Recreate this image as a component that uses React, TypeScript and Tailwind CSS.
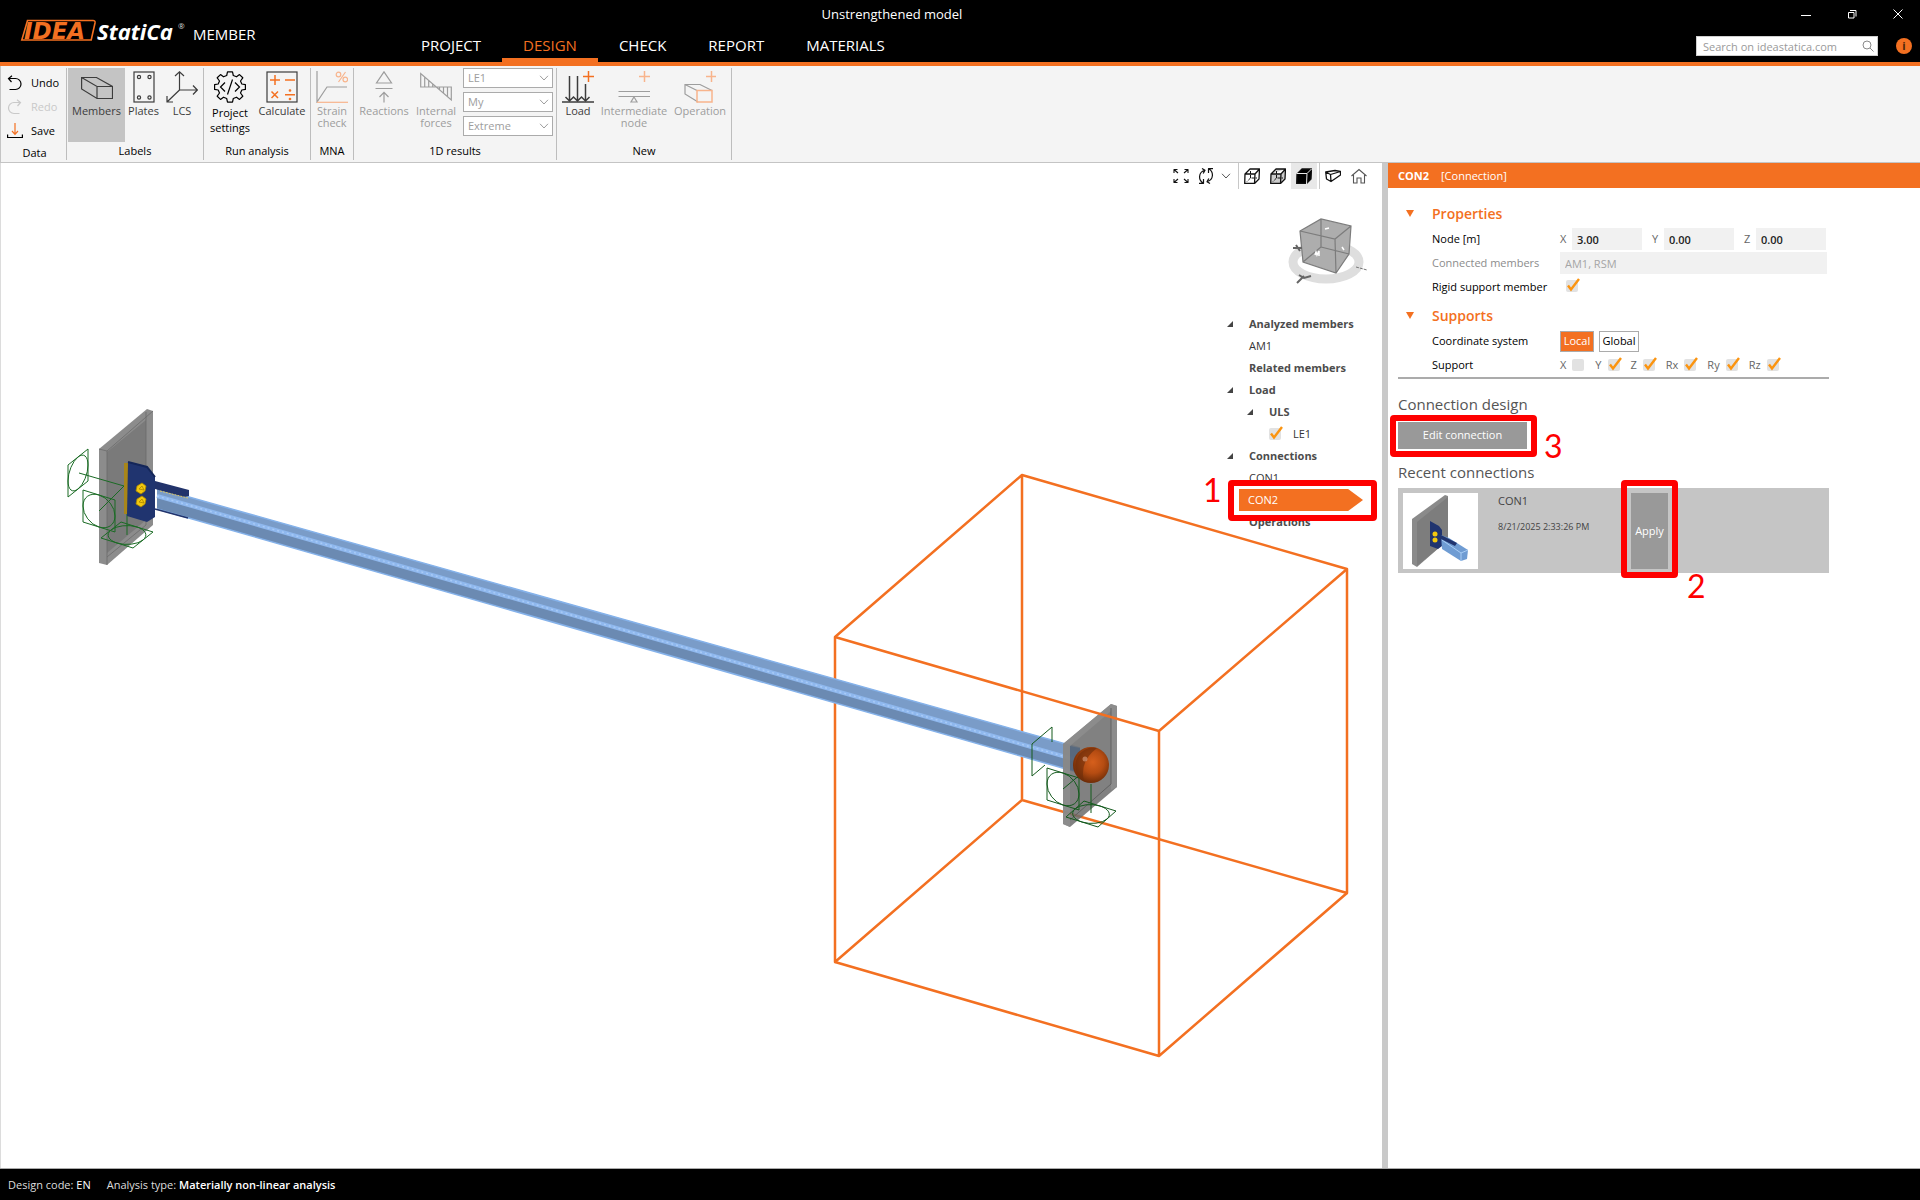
import React from "react";

type P = { children?: React.ReactNode };

/* ---------- ribbon icons (32 x 32 grid) ---------- */

const Glyph = ({ children }: P) => (
  <svg viewBox="0 0 32 32" className="h-8 w-8 shrink-0" fill="none" stroke="currentColor" strokeWidth="1.2" aria-hidden="true">
    {children}
  </svg>
);

const MembersIcon = () => (
  <Glyph>
    <path d="M.6 6.5 L15.5 6.5 L31.5 15.5 V27.5 H16 L.6 18 Z M.6 6.5 L16 15.5 H31.5 M16 15.5 V27.5" />
  </Glyph>
);
const PlatesIcon = () => (
  <Glyph>
    <rect x="6" y="1" width="20" height="30" />
    <circle cx="11" cy="6" r="1.6" />
    <circle cx="21.5" cy="6" r="1.6" />
    <circle cx="11" cy="26.5" r="1.6" />
    <circle cx="21.5" cy="26.5" r="1.6" />
  </Glyph>
);
const LcsIcon = () => (
  <Glyph>
    <path d="M13.5 1 V19 M9 5 L13.5 .8 L18 5 M13.5 19 H31 M27 14.5 L31.3 19 L27 23.5 M13.5 19 L1 31 M1 25 V31 H7" />
  </Glyph>
);
const SettingsIcon = () => (
  <Glyph>
    <path d="M13.5 .8 H18.500 L19.300 4.500 L22.500 5.800 L25.500 3.600 L28.800 6.800 L26.500 10 L27.800 13 L31.400 13.600 V18.400 L27.800 19 L26.500 22 L28.800 25.200 L25.500 28.400 L22.500 26.200 L19.300 27.500 L18.500 31.200 H13.500 L12.700 27.500 L9.500 26.200 L6.500 28.400 L3.200 25.200 L5.500 22 L4.200 19 L.6 18.400 V13.600 L4.200 13 L5.500 10 L3.200 6.800 L6.500 3.600 L9.500 5.800 L12.700 4.500 Z" strokeLinejoin="round" />
    <path d="M11 11.5 L6.5 16 L11 20.5 M21 11.5 L25.5 16 L21 20.5 M18.5 8.5 L13.5 23.5" />
  </Glyph>
);
const CalculateIcon = () => (
  <Glyph>
    <rect x="1" y="1" width="30" height="30" />
    <g stroke="#f37021" strokeWidth="1.5">
      <path d="M4 9 H14 M9 4 V14 M19 9 H29 M5.5 20.5 L12 27 M12 20.5 L5.5 27 M19 23.8 H29" />
      <circle cx="24" cy="19.5" r=".6" />
      <circle cx="24" cy="28" r=".6" />
    </g>
  </Glyph>
);
const StrainIcon = () => (
  <Glyph>
    <path d="M1 0 V31 L11 16 H31" />
    <g stroke="#f8b48c">
      <path d="M1 31.3 H32" />
      <path d="M29.5 1 L22.5 11" />
      <circle cx="22.5" cy="3.5" r="2.3" />
      <circle cx="29.3" cy="8.5" r="2.3" />
    </g>
  </Glyph>
);
const ReactionsIcon = () => (
  <Glyph>
    <path d="M16 .8 L23.5 12 H8.5 Z M7.5 17.5 H24.5 M16 31.5 V21.5 M11.5 26 L16 21.3 L20.5 26" />
  </Glyph>
);
const InternalIcon = () => (
  <Glyph>
    <path d="M.7 2.5 V16 H31.3 V29 Z M4.7 6 V16 M8.7 9.5 V16 M12.7 13 V16 M19.5 16 V19 M23.5 16 V22.5 M27.5 16 V26" />
  </Glyph>
);
const LoadIcon = () => (
  <Glyph>
    <path d="M7.5 5 V30 M15.5 5 V30 M23.5 13 V30 M3.5 26 L7.5 30 L11.5 26 L15.5 30 L19.5 26 L23.5 30 L27.5 26" strokeWidth="1.5" />
    <path d="M0 31 H32" strokeWidth="1.5" />
    <path d="M21 5.5 H32 M26.5 0 V11" stroke="#f37021" strokeWidth="1.5" />
  </Glyph>
);
const IntermediateIcon = () => (
  <Glyph>
    <path d="M.5 20.5 H32 M.5 25.5 H32 M16 26 L19 31 H13 Z" />
    <path d="M21 5.5 H32 M26.5 0 V11" stroke="#f8b48c" strokeWidth="1.5" />
  </Glyph>
);
const OperationIcon = () => (
  <Glyph>
    <path d="M14 31 L1 23 V13.5 H16 L28 19.5 M1 13.5 L13 19.5" />
    <g stroke="#f8b48c" strokeWidth="1.5">
      <path d="M13 19.5 H28 V31 H13 Z M22 5.5 H32 M27.5 0 V11" />
    </g>
  </Glyph>
);

/* ---------- ribbon ---------- */

function Group({ label, children }: P & { label: string }) {
  return (
    <section className="flex flex-col border-r border-[#bdbdbd] px-px" aria-label={label}>
      <div className="flex flex-1">{children}</div>
      <h2 className="pb-px text-center text-[11px] leading-4 text-black">{label}</h2>
    </section>
  );
}

function Tool({
  icon,
  label,
  width,
  disabled,
  active,
  strong,
}: {
  icon: React.ReactNode;
  label: string;
  width: string;
  disabled?: boolean;
  active?: boolean;
  strong?: boolean;
}) {
  const tone = disabled ? "text-[#9d9d9d]" : strong ? "text-black" : "text-[#3c3c3c]";
  return (
    <button
      type="button"
      disabled={disabled}
      aria-pressed={active}
      className={`flex h-[74px] flex-col items-center gap-0.5 pt-[3px] text-[11px] ${strong ? "leading-[15px]" : "leading-3"} ${tone} ${width} ${active ? "bg-[#c4c4c4]" : ""}`}
    >
      {icon}
      <span>{label}</span>
    </button>
  );
}

function ResultSelect({ label, value }: { label: string; value: string }) {
  return (
    <div className="relative h-5 text-[#9d9d9d]">
      <select
        aria-label={label}
        disabled
        defaultValue={value}
        className="h-5 w-[90px] appearance-none border border-[#ababab] bg-white px-1 text-[11px] leading-4 text-[#9d9d9d] opacity-100"
      >
        <option>{value}</option>
      </select>
      <svg viewBox="0 0 10 6" className="pointer-events-none absolute top-[7px] right-1 h-1.5 w-2.5" fill="none" stroke="currentColor" aria-hidden="true">
        <path d="M1 .8 L5 5 L9 .8" />
      </svg>
    </div>
  );
}

function DataButton({ icon, label, disabled }: { icon: React.ReactNode; label: string; disabled?: boolean }) {
  return (
    <button
      type="button"
      disabled={disabled}
      className={`flex h-6 items-center gap-2 text-[11px] ${disabled ? "text-[#c9c9c9]" : "text-black"}`}
    >
      <svg viewBox="0 0 16 16" className="h-4 w-4" fill="none" stroke="currentColor" strokeWidth="1.2" aria-hidden="true">
        {icon}
      </svg>
      {label}
    </button>
  );
}

function Ribbon() {
  return (
    <div className="flex h-[97px] border-b border-l border-[#c4c4c4] bg-[#f4f4f4] pt-0.5 pb-0.5">
      <section className="flex w-[66px] flex-col border-r border-[#bdbdbd] pl-1.5" aria-label="Data">
        <div className="flex flex-1 flex-col pt-[3px]">
          <DataButton label="Undo" icon={<path d="M5 .8 L1.5 3.5 L4.500 7 M1.5 3.5 H8.5 A5.5 5.5 0 0 1 8.5 14.5 H2.5" />} />
          <DataButton label="Redo" disabled icon={<path d="M10 .8 L13.5 3.5 L10.5 7 M13.5 3.5 H7 A5.5 5.5 0 0 0 7 14.5 H12.5" />} />
          <DataButton
            label="Save"
            icon={
              <>
                <path d="M.6 11.5 V14.5 H15.4 V11.5" />
                <path d="M8 0 V11 M5 8 L8 11.3 L11 8" stroke="#f37021" />
              </>
            }
          />
        </div>
        <h2 className="pr-1 pb-px text-center text-[11px] leading-3 text-black">Data</h2>
      </section>
      <Group label="Labels">
        <Tool active icon={<MembersIcon />} label="Members" width="w-[57px]" />
        <Tool icon={<PlatesIcon />} label="Plates" width="w-[37px]" />
        <Tool icon={<LcsIcon />} label="LCS" width="w-[40px]" />
      </Group>
      <Group label="Run analysis">
        <Tool strong icon={<SettingsIcon />} label="Project settings" width="w-[50px]" />
        <Tool icon={<CalculateIcon />} label="Calculate" width="w-[54px]" />
      </Group>
      <Group label="MNA">
        <Tool disabled icon={<StrainIcon />} label="Strain check" width="w-[40px]" />
      </Group>
      <Group label="1D results">
        <Tool disabled icon={<ReactionsIcon />} label="Reactions" width="w-[58px]" />
        <Tool disabled icon={<InternalIcon />} label="Internal forces" width="w-[46px]" />
        <div className="flex flex-col gap-1 px-1 pr-0.5">
          <ResultSelect label="Load effect" value="LE1" />
          <ResultSelect label="Force component" value="My" />
          <ResultSelect label="Result values" value="Extreme" />
        </div>
      </Group>
      <Group label="New">
        <Tool icon={<LoadIcon />} label="Load" width="w-[40px]" />
        <Tool disabled icon={<IntermediateIcon />} label="Intermediate node" width="w-[72px]" />
        <Tool disabled icon={<OperationIcon />} label="Operation" width="w-[60px]" />
      </Group>
    </div>
  );
}

/* ---------- header ---------- */

function Header() {
  const tabs = ["PROJECT", "DESIGN", "CHECK", "REPORT", "MATERIALS"];
  return (
    <header className="grid h-[66px] grid-cols-[400px_1fr_532px] border-b-4 border-[#f37021] bg-black text-white">
      <div className="flex items-center pl-5">
        <svg viewBox="0 0 172 28" className="h-7 w-[172px]" role="img" aria-label="IDEA StatiCa">
          <path d="M7.5 3.500 H73 Q75.5 3.500 75 6 L71.2 23 H1.8 Z" fill="none" stroke="#f37021" strokeWidth="1.6" />
          <text x="4" y="21.500" fill="#f37021" fontFamily="DejaVu Sans, sans-serif" fontStyle="italic" fontWeight="700" fontSize="23">
            IDEA
          </text>
          <text x="77" y="22.5" fill="#fff" fontFamily="Open Sans, sans-serif" fontStyle="italic" fontWeight="700" fontSize="22">
            StatiCa
          </text>
          <text x="158" y="12" fill="#ddd" fontFamily="Open Sans, sans-serif" fontSize="8">
            ®
          </text>
        </svg>
        <span className="pt-1.5 pl-px text-[15px]">MEMBER</span>
      </div>
      <div className="flex flex-col">
        <h1 className="h-[34px] pt-1 pr-1 text-center text-[13px] leading-5">Unstrengthened model</h1>
        <nav className="flex h-7">
          {tabs.map((t) => (
            <a
              key={t}
              href="#"
              aria-current={t === "DESIGN" ? "page" : undefined}
              className={
                t === "DESIGN"
                  ? "border-b-4 border-[#f37021] px-[21px] text-[15px] leading-[22px] text-[#f37021]"
                  : "px-[21px] text-[15px] leading-[22px]"
              }
            >
              {t}
            </a>
          ))}
        </nav>
      </div>
      <div className="flex flex-col items-end">
        <div className="flex h-9 gap-[26px] pt-1 pr-3">
          <button type="button" aria-label="Minimize" className="flex h-5 w-5 items-center justify-center">
            <svg viewBox="0 0 10 10" className="h-2.5 w-2.5" stroke="#fff" aria-hidden="true">
              <path d="M0 6.5 H10" />
            </svg>
          </button>
          <button type="button" aria-label="Restore" className="flex h-5 w-5 items-center justify-center">
            <svg viewBox="0 0 10 10" className="h-2.5 w-2.5" stroke="#fff" fill="none" aria-hidden="true">
              <path d="M1.5 3.5 H7 V9 H1.5 Z M3 1.5 H9 V7.5" />
            </svg>
          </button>
          <button type="button" aria-label="Close" className="flex h-5 w-5 items-center justify-center">
            <svg viewBox="0 0 10 10" className="h-2.5 w-2.5" stroke="#fff" aria-hidden="true">
              <path d="M.5 .5 L9.5 9.5 M9.5 .5 L.5 9.5" />
            </svg>
          </button>
        </div>
        <div className="flex items-center gap-[18px] pr-2">
          <div className="relative">
            <input
              type="search"
              aria-label="Search on ideastatica.com"
              placeholder="Search on ideastatica.com"
              className="block h-5 w-[182px] border border-[#cfcfcf] bg-white px-1.5 text-[11px] text-black placeholder:text-[#9a9a9a]"
            />
            <svg viewBox="0 0 12 12" className="pointer-events-none absolute top-1 right-1 h-3 w-3" fill="none" stroke="#8a8a8a" aria-hidden="true">
              <circle cx="5" cy="5" r="4" />
              <path d="M8 8 L11.5 11.5" />
            </svg>
          </div>
          <button type="button" aria-label="Information" className="h-4 w-4 rounded-full bg-[#f37021] text-[11px] leading-4 font-bold text-[#4a2508]">
            i
          </button>
        </div>
      </div>
    </header>
  );
}

/* ---------- 3D scene ---------- */

/* A circle inscribed in a parallelogram spanned by half-vectors u and v around c. */
function Restraint({ c, u, v }: { c: number[]; u: number[]; v: number[] }) {
  return (
    <g transform={`matrix(${u[0]} ${u[1]} ${v[0]} ${v[1]} ${c[0]} ${c[1]})`}>
      <rect x="-1" y="-1" width="2" height="2" vectorEffect="non-scaling-stroke" />
      <circle r="1" vectorEffect="non-scaling-stroke" />
    </g>
  );
}

function Scene() {
  return (
    <svg
      viewBox="1 163 1381 1005"
      preserveAspectRatio="xMinYMin meet"
      className="absolute inset-0 h-full w-full"
      role="img"
      aria-label="Analyzed member AM1 between connections CON1 and CON2"
    >
      <defs>
        <radialGradient id="ball" cx=".55" cy=".42" r=".62">
          <stop offset="0" stopColor="#d65f1c" />
          <stop offset=".5" stopColor="#b54c12" />
          <stop offset="1" stopColor="#642806" />
        </radialGradient>
      </defs>
      <g fill="none" stroke="#f37021" strokeWidth="2.5" strokeLinejoin="round">
        <path d="M1022 475 L1347 569 V893 L1022 800 Z M1022 475 L835 637 V962 L1022 800" />
      </g>

      <path d="M99 449 L147 409 L153 411 V525 L107 565 L99 563 Z" fill="#8c8c8c" />
      <path d="M107 452 L146 420 V520 L107 553 Z" fill="#7a7a7a" />
      <path d="M99 449 L107 451 L153 411 M107 451 V565 M146 412 V525 L107 557" fill="none" stroke="#6b6b6b" strokeWidth=".8" />
      <g fill="none" stroke="#1a6b24" strokeWidth="1">
        <Restraint c={[78, 473]} u={[10, -8]} v={[0, 16]} />
        <Restraint c={[99, 511]} u={[16, 5]} v={[0, 16]} />
        <Restraint c={[127, 535]} u={[16, 5]} v={[10, -8]} />
        <path d="M79 473 L124 486 L99 511 M127 512 V535" />
      </g>

      <path d="M157 488 L1080 748 V773 L157 509 Z" fill="#6b8ab2" />
      <path d="M157 488 L1080 748 V761 L157 496 Z" fill="#7a9cc8" />
      <path d="M157 488 L1080 748 M157 509 L1080 773" stroke="#85b2ea" strokeWidth="1.5" />
      <path d="M157 496 L1080 761" stroke="#8fb8ee" strokeWidth="4" />
      <path d="M157 496 L1080 761" stroke="#a9cbf7" strokeWidth="1.5" strokeDasharray="2 3" />
      <path d="M155 481 L189 490 V496 L184 497 L155 489 Z" fill="#22336b" />
      <path d="M160 491 L188 498" stroke="#e0c860" strokeDasharray="2 1" />
      <path d="M155 509 L188 518" stroke="#22336b" strokeWidth="1.5" />
      <path d="M124 463 H128 V514 H124 Z" fill="#a8861a" />
      <path d="M128 462 L147 467 L155 477 V517 L147 522 L127 516 Z" fill="#20346f" />
      <path d="M128 462 L147 467 L155 477" fill="none" stroke="#142659" strokeWidth="2" />
      <g fill="#f2c80f" stroke="#a88500" strokeWidth=".8">
        <path d="M137 486 L142 483 L146 486 L145 491 L141 494 L136 491 Z" />
        <path d="M137 499 L142 496 L146 499 L145 504 L141 507 L136 504 Z" />
        <path d="M139 489 L142 486 L144 490 Z M139 502 L142 499 L144 503 Z" />
      </g>

      <path d="M1063 744 L1111 704 L1117 706 V787 L1070 827 L1063 824 Z" fill="#6c6c6c" fillOpacity=".86" />
      <path d="M1070 746 L1080 748 V773 L1070 770 Z" fill="#4f6580" fillOpacity=".7" />
      <path d="M1111 704 L1117 706 V787 L1111 790 Z M1063 744 L1070 746 V827 L1063 824 Z M1063 744 L1111 704 L1117 706 L1070 746 Z" fill="#8f8f8f" fillOpacity=".8" />
      <path d="M1111 708 V784 L1070 820" fill="none" stroke="#585858" strokeWidth=".8" />
      <g fill="none" stroke="#145a1d" strokeWidth="1">
        <path d="M1052 742 V727 L1032 744 V776 L1045 765" />
        <Restraint c={[1063, 789]} u={[16, 5]} v={[0, 16]} />
        <Restraint c={[1091, 814]} u={[16, 5]} v={[9, -8]} />
        <path d="M1063 789 L1081 774 M1091 784 V813" />
      </g>
      <circle cx="1091" cy="765" r="18" fill="url(#ball)" />
      <path d="M1097 748 A18 18 0 0 0 1084 781 Q1079 762 1097 748" fill="#6e2e0a" fillOpacity=".65" />
      <circle cx="1085" cy="759" r="2.5" fill="#c98a68" fillOpacity=".8" />
      <path d="M835 637 L1159 731 M1159 731 L1347 569 M1159 731 V1056 L835 962 M1159 1056 L1347 893" fill="none" stroke="#f37021" strokeWidth="2.5" strokeLinejoin="round" />
    </svg>
  );
}

const ViewGlyph = ({ children }: P) => (
  <svg viewBox="0 0 16 16" className="h-4 w-4" fill="none" stroke="#111" strokeWidth="1.3" strokeLinejoin="round" aria-hidden="true">
    {children}
  </svg>
);

function ViewButton({ label, active, children, width = "w-[26px]" }: P & { label: string; active?: boolean; width?: string }) {
  return (
    <button
      type="button"
      aria-label={label}
      className={`flex items-center justify-center ${width} ${active ? "bg-[#e8e8e8]" : ""}`}
    >
      {children}
    </button>
  );
}

const cubePath = "M1 6 L6 1 H15.5 L15 11 L10.500 15.500 H.7 Z M1 6 H11 L15.5 1 M11 6 L10.500 15.5";

function ViewToolbar() {
  return (
    <div className="flex h-[26px]">
      <ViewButton label="Zoom to fit">
        <ViewGlyph>
          <path d="M1 5 V1.500 H4.500 M1 1.500 L5 5 M11.500 1.500 H15 V5 M15 1.500 L11 5 M1 11 V14.500 H4.500 M1 14.500 L5 11 M11.500 14.500 H15 V11 M15 14.500 L11 11" strokeWidth="1.1" />
        </ViewGlyph>
      </ViewButton>
      <ViewButton label="Rotate view" width="w-6">
        <ViewGlyph>
          <path d="M1 15.300 H5.500 V11 M5 15 C0 12 .5 4 6.500 2.500 M4 .5 L7 2.300 L5.200 5.500 M15 .7 H10.500 V5 M11 1 C16 4 15.500 12 9.500 13.500 M12 15.500 L9 13.700 L10.800 10.500" strokeWidth="1.200" />
        </ViewGlyph>
      </ViewButton>
      <ViewButton label="More views" width="w-4">
        <svg viewBox="0 0 10 6" className="h-1.5 w-2.5" fill="none" stroke="#555" aria-hidden="true">
          <path d="M1 .8 L5 5 L9 .8" />
        </svg>
      </ViewButton>
      <div className="ml-1 border-l border-[#c8c8c8]" />
      <ViewButton label="Wireframe">
        <ViewGlyph>
          <path d={cubePath} />
          <path d="M6.500 3 V10 H13 M6.500 10 L3 13.500" strokeWidth="1" strokeDasharray="3 1" />
        </ViewGlyph>
      </ViewButton>
      <ViewButton label="Transparent">
        <ViewGlyph>
          <path d={cubePath} fill="#ccc" />
          <path d="M6.500 3 V10 H13 M6.500 10 L3 13.500" strokeWidth="1" strokeDasharray="3 1" />
        </ViewGlyph>
      </ViewButton>
      <ViewButton label="Solid" active>
        <ViewGlyph>
          <path d="M1 6 L6 1 H15.5 L15 11 L10.500 15.500 H.7 Z" fill="#000" />
          <path d="M.5 5.500 H11 L15.5 1 M11 5.500 L10.500 16" stroke="#e8e8e8" strokeWidth="1" />
        </ViewGlyph>
      </ViewButton>
      <div className="ml-0.5 border-l border-[#c8c8c8]" />
      <ViewButton label="Section view">
        <ViewGlyph>
          <path d="M.7 4 L10 2.500 L15.500 3.500 V7 L6 13.500 L1.500 11 Z M.7 4 L5.500 6.500 L15.500 3.500 M5.500 6.500 L6 13.500" />
        </ViewGlyph>
      </ViewButton>
      <ViewButton label="Home view">
        <svg viewBox="0 0 16 16" className="h-4 w-4" fill="none" stroke="#555" strokeWidth="1.1" aria-hidden="true">
          <path d="M.5 8 L8 1.5 L15.5 8 M2.5 7 V15 H6 V10 H10 V15 H13.5 V7" />
        </svg>
      </ViewButton>
    </div>
  );
}

function NavCube() {
  return (
    <svg viewBox="0 0 80 68" className="mt-[29px] mr-[15px] h-[68px] w-20" role="img" aria-label="View cube">
      <ellipse cx="39" cy="44" rx="33" ry="17" fill="none" stroke="#dedede" strokeWidth="9" />
      <path d="M13 13 L34 1 L64 8 L62 36 L49 55 L16 44 Z" fill="#adadad" />
      <path d="M13 13 L48 21 L64 8 M48 21 L49 55 M13 13 L34 1 L64 8 L62 36 L49 55 L16 44 Z M34 1 V29 L16 44 M34 29 L62 36" fill="none" stroke="#7c7c7c" strokeWidth="1.2" />
      <path d="M38 11 L42 10 M28 37 L29 34 L30 37 L32 33 V38 M55 29 L57 32" stroke="#fff" strokeWidth="1.5" fill="none" />
      <path d="M6 30 L15 30 M9 27 L13 33 M10 65 L17 58 M12 57 L17 60 L24 58" stroke="#666" strokeWidth="2" fill="none" />
      <path d="M69 49 L80 52" stroke="#777" strokeDasharray="3 1" />
    </svg>
  );
}

/* ---------- shared controls ---------- */

function Tick({ label, checked }: { label: string; checked?: boolean }) {
  return (
    <span className="relative inline-flex h-3 w-3 shrink-0">
      <input
        type="checkbox"
        aria-label={label}
        defaultChecked={checked}
        className="peer h-3 w-3 appearance-none rounded-xs bg-[#e2e2e2]"
      />
      <svg
        viewBox="0 0 14 14"
        className="pointer-events-none absolute -top-0.5 left-0 hidden h-3.5 w-3.5 peer-checked:block"
        fill="none"
        stroke="#fb9410"
        strokeWidth="2.4"
        aria-hidden="true"
      >
        <path d="M2 7.5 L5 11.5 L13 1" />
      </svg>
    </span>
  );
}

/* Red frame with a step number, laid over the control it surrounds. */
function Callout({ frame, number, step }: { frame: string; number: string; step: number }) {
  return (
    <>
      <span className={`pointer-events-none absolute z-10 rounded border-6 border-[#fe0000] ${frame}`} />
      <span className={`pointer-events-none absolute z-10 font-['Lato',sans-serif] text-[32px] leading-8 text-[#fe0000] ${number}`}>
        {step}
      </span>
    </>
  );
}

/* ---------- model tree ---------- */

const Expander = () => (
  <svg viewBox="0 0 6 6" className="h-1.5 w-1.5 shrink-0" fill="#444" aria-hidden="true">
    <path d="M6 0 V6 H0 Z" />
  </svg>
);

function Branch({ label, open, indent = "" }: { label: string; open?: boolean; indent?: string }) {
  return (
    <li className={`flex h-[22px] items-center ${indent}`}>
      <span className="flex w-[22px]">{open && <Expander />}</span>
      <span className="font-bold text-[#4c4c4c]">{label}</span>
    </li>
  );
}

function Tree() {
  return (
    <ul className="mt-[27px] w-[155px] text-[11px] text-[#333]">
      <Branch label="Analyzed members" open />
      <li className="flex h-[22px] items-center pl-[22px]">AM1</li>
      <Branch label="Related members" />
      <Branch label="Load" open />
      <Branch label="ULS" open indent="pl-5" />
      <li className="flex h-[22px] items-center gap-3 pl-[42px]">
        <Tick label="LE1" checked />
        LE1
      </li>
      <Branch label="Connections" open />
      <li className="flex h-[22px] items-center pl-[22px]">CON1</li>
      <li className="relative flex h-[22px] pl-3">
        <button
          type="button"
          className="w-[124px] bg-[#f37021] pl-[9px] text-left text-white [clip-path:polygon(0_0,88%_0,100%_50%,88%_100%,0_100%)]"
        >
          CON2
        </button>
        <Callout step={1} frame="-top-[9px] left-px h-[41px] w-[149px]" number="-top-[15px] -left-6" />
      </li>
      <Branch label="Operations" />
    </ul>
  );
}

/* ---------- properties panel ---------- */

function SectionTitle({ children }: P) {
  return (
    <h3 className="flex h-6 items-center gap-[18px] pl-2 text-[14px] font-semibold text-[#f37021]">
      <svg viewBox="0 0 8 7" className="h-[7px] w-2" fill="currentColor" aria-hidden="true">
        <path d="M0 0 H8 L4 7 Z" />
      </svg>
      {children}
    </h3>
  );
}

function Row({ label, muted, children }: P & { label: string; muted?: boolean }) {
  return (
    <div className="flex h-6 items-center pl-[34px]">
      <span className={`w-32 shrink-0 ${muted ? "text-[#8c8c8c]" : "font-medium text-black"}`}>{label}</span>
      {children}
    </div>
  );
}

function Thumbnail() {
  return (
    <svg viewBox="0 0 75 76" className="h-[76px] w-[75px] bg-white" role="img" aria-label="CON1 preview">
      <path d="M9 26 L42 2 L45 3 V47 L14 74 L9 71 Z" fill="#8a8a8a" />
      <path d="M14 29 L45 4 V47 L14 73 Z" fill="#7d7d7d" />
      <path d="M27 28 L36 33 L39 37 V53 L35 56 L27 53 Z" fill="#20346f" />
      <path d="M38 42 L46 45 L65 57 L64 66 L58 68 L39 56 Z" fill="#6f9cd3" />
      <path d="M39 47 L58 60 L65 57 M58 60 V68" fill="none" stroke="#a9cdf5" />
      <path d="M38 42 L54 50 L52 53 L38 46 Z" fill="#20346f" />
      <g fill="#f2c80f">
        <circle cx="32" cy="41" r="2.5" />
        <circle cx="32" cy="47" r="2.5" />
      </g>
    </svg>
  );
}

function PropertiesPanel() {
  const node: [string, string][] = [
    ["X", "3.00"],
    ["Y", "0.00"],
    ["Z", "0.00"],
  ];
  return (
    <aside className="w-[532px] shrink-0 bg-white text-[11px]">
      <h2 className="flex h-[25px] items-center gap-3 bg-[#f37021] pt-px pl-2.5 text-white">
        <b>CON2</b>
        <span>[Connection]</span>
      </h2>
      <div className="w-[441px] pt-[13px] pl-2.5">
        <div className="border-b-2 border-[#ababab]">
          <SectionTitle>Properties</SectionTitle>
          <div className="pt-0.5 pb-1">
            <Row label="Node [m]">
              <div className="flex gap-2.5">
                {node.map(([axis, value]) => (
                  <label key={axis} className="flex items-center text-[#666]">
                    <span className="w-3">{axis}</span>
                    <input className="h-[22px] w-[70px] bg-[#f1f1f1] px-[5px] font-semibold text-[#222]" defaultValue={value} />
                  </label>
                ))}
              </div>
            </Row>
            <Row label="Connected members" muted>
              <input
                aria-label="Connected members"
                readOnly
                defaultValue="AM1, RSM"
                className="h-[22px] w-[267px] bg-[#f1f1f1] px-[5px] text-[#a5a5a5]"
              />
            </Row>
            <Row label="Rigid support member">
              <span className="flex pb-0.5 pl-1.5">
                <Tick label="Rigid support member" checked />
              </span>
            </Row>
          </div>
          <SectionTitle>Supports</SectionTitle>
          <div className="pt-0.5">
            <Row label="Coordinate system">
              <div className="flex gap-[5px]">
                <button type="button" aria-pressed="true" className="h-[21px] w-[34px] border border-[#ababab] bg-[#f37021] text-white">
                  Local
                </button>
                <button type="button" aria-pressed="false" className="h-[21px] w-10 border border-[#ababab] bg-white text-black">
                  Global
                </button>
              </div>
            </Row>
            <Row label="Support">
              <div className="flex gap-[11px] text-[#666]">
                {["X", "Y", "Z", "Rx", "Ry", "Rz"].map((d) => (
                  <label key={d} className="flex items-center gap-1.5">
                    {d}
                    <Tick label={d} checked={d !== "X"} />
                  </label>
                ))}
              </div>
            </Row>
          </div>
        </div>
        <h3 className="mt-[13px] text-[15px] leading-6 text-[#555]">Connection design</h3>
        <div className="relative mt-1.5 flex">
          <button type="button" className="h-[27px] w-[129px] bg-[#999] text-white">
            Edit connection
          </button>
          <Callout step={3} frame="-top-[7px] -left-2 h-[42px] w-[147px]" number="top-2 left-[146px]" />
        </div>
        <h3 className="mt-[11px] text-[15px] leading-6 text-[#555]">Recent connections</h3>
        <div className="mt-1 flex h-[85px] bg-[#c5c5c5] pt-[5px] pl-[5px]">
          <Thumbnail />
          <div className="w-[153px] pl-5 text-[#444]">
            <p className="leading-4">CON1</p>
            <p className="mt-2.5 text-[9px] leading-4">8/21/2025 2:33:26 PM</p>
          </div>
          <div className="relative h-[76px]">
            <button type="button" className="h-[76px] w-[37px] bg-[#999] text-white">
              Apply
            </button>
            <Callout step={2} frame="-top-[13px] -left-2.5 h-[98px] w-[57px]" number="top-[77px] left-[56px]" />
          </div>
        </div>
      </div>
    </aside>
  );
}

export default function App() {
  return (
    <div className="flex min-h-screen flex-col bg-white font-['Open_Sans',sans-serif] text-[11px]">
      <Header />
      <Ribbon />
      <main className="flex flex-1">
        <section className="relative flex flex-1 flex-col items-end border-l border-[#dcdcdc]" aria-label="3D view">
          <Scene />
          <div className="relative flex flex-col items-end">
            <div className="pr-2.5">
              <ViewToolbar />
            </div>
            <NavCube />
            <Tree />
          </div>
        </section>
        <div className="w-1.5 bg-[#c9c9c9]" />
        <PropertiesPanel />
      </main>
      <footer className="flex h-8 items-center gap-4 border-t border-[#aaa] bg-black pt-px pl-2 text-[11px] text-[#ddd]">
        <span>
          Design code: <span className="font-medium text-white">EN</span>
        </span>
        <span>
          Analysis type: <span className="font-semibold text-white">Materially non-linear analysis</span>
        </span>
      </footer>
    </div>
  );
}
